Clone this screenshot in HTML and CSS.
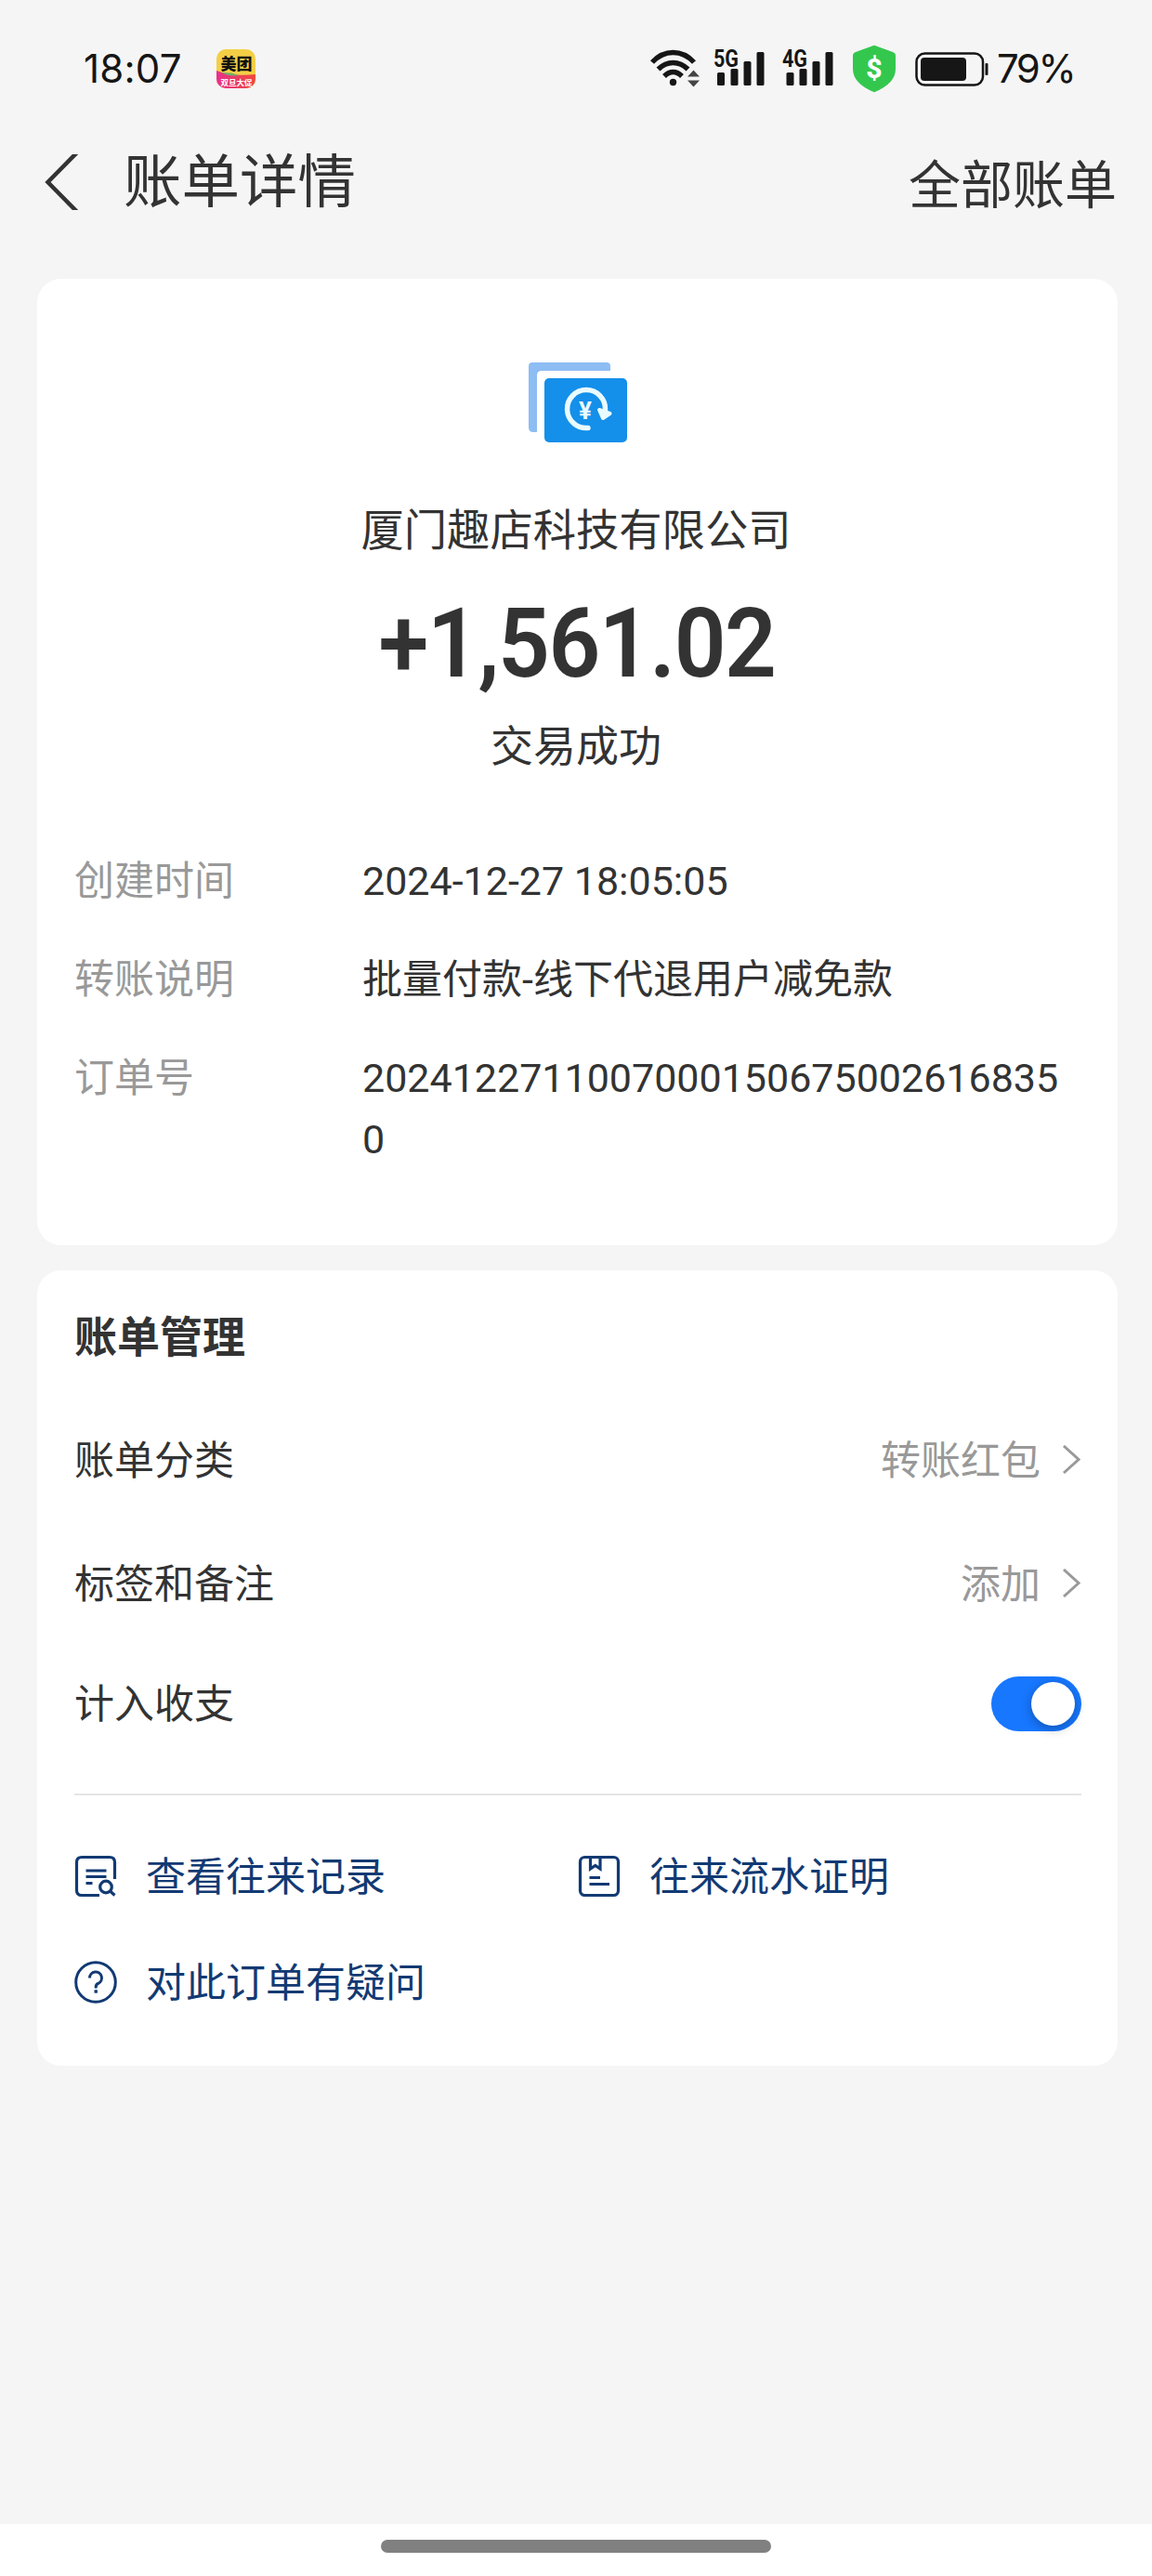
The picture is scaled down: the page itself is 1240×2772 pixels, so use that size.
FILE: index.html
```html
<!DOCTYPE html>
<html lang="zh-CN">
<head>
<meta charset="utf-8">
<title>账单详情</title>
<link rel="stylesheet" href="styles.css">
</head>
<body>
<div class="page">
  <div class="status-bar">
    <span class="clock">18:07</span>
    <svg class="app-badge" width="42" height="42" viewBox="0 0 42 42">
      <defs>
        <clipPath id="badge"><rect width="42" height="42" rx="10"/></clipPath>
        <linearGradient id="promo" x1="0" x2="1" y1="0" y2="0"><stop offset="0" stop-color="#e8308c"/><stop offset="1" stop-color="#ee4a3c"/></linearGradient>
      </defs>
      <g clip-path="url(#badge)">
        <rect width="42" height="42" fill="#f4cf46"/>
        <path d="M0 23C12 28 28 28.500 42 27V42H0Z" fill="url(#promo)"/>
        <path d="M5 25C12 28.500 18 29 24 28L16 25.500Z" fill="#6fae6a"/>
        <text class="badge-name" x="21.500" y="21.500">美团</text>
        <text class="badge-promo" x="21.500" y="38.500">双旦大促</text>
      </g>
    </svg>
    <svg class="status-icons" width="370" height="56" viewBox="696 46 370 56">
      <g fill="none" stroke="#161616" stroke-width="5.500">
        <path d="M702 67C715 53 734 53 747 67"/>
        <path d="M708.500 74.500C718 65 731 65 740.500 74.500"/>
        <path d="M715 82C721 76 728 76 734 82"/>
      </g>
      <circle cx="724.500" cy="88.500" r="3.700" fill="#161616"/>
      <path d="M740 82.500L746.500 75.500L753 82.500ZM740 86.500L746.500 93.500L753 86.500Z" fill="#444"/>
      <text class="net" x="768" y="72" textLength="27" lengthAdjust="spacingAndGlyphs">5G</text>
      <text class="net" x="842" y="72" textLength="27" lengthAdjust="spacingAndGlyphs">4G</text>
      <g fill="#161616">
        <rect x="772" y="78" width="8" height="14" rx="1.500"/>
        <rect x="786.500" y="74" width="8" height="18" rx="1.500"/>
        <rect x="800.500" y="66" width="8" height="26" rx="1.500"/>
        <rect x="814.500" y="56" width="8" height="36" rx="1.500"/>
        <rect x="846.500" y="78" width="8" height="14" rx="1.500"/>
        <rect x="860.500" y="74" width="8" height="18" rx="1.500"/>
        <rect x="874.500" y="66" width="8" height="26" rx="1.500"/>
        <rect x="888.500" y="56" width="8" height="36" rx="1.500"/>
      </g>
      <path d="M941 48.800L961 56Q964 57.200 964 60V74Q964 90 941 99.200Q918 90 918 74V60Q918 57.200 921 56Z" fill="#34c74e"/>
      <text class="dollar" x="941" y="84">$</text>
      <rect x="986.500" y="57.500" width="71.500" height="34" rx="9" fill="none" stroke="#161616" stroke-width="2.500"/>
      <rect x="991" y="62" width="49" height="25" rx="4" fill="#161616"/>
      <rect x="1060.500" y="68" width="3" height="13" rx="1" fill="#161616"/>
    </svg>
    <span class="battery-level">79%</span>
  </div>

  <header class="nav">
    <svg class="back" width="40" height="60" viewBox="46 166 40 60">
      <path d="M84 163L51.500 196L84 229" fill="none" stroke="#333" stroke-width="4.500"/>
    </svg>
    <h1 class="nav-title">账单详情</h1>
    <a class="nav-action">全部账单</a>
  </header>

  <section class="card summary">
    <svg class="pay-icon" width="106" height="86" viewBox="569 390 106 86">
      <path d="M569 394Q569 390 573 390H653Q657 390 657 394V399H583Q578 399 578 404V465H574Q569 465 569 460Z" fill="#8dbdf3"/>
      <rect x="586" y="407" width="89" height="69" rx="5" fill="#148fea"/>
      <path d="M633 460.500A20.500 20.500 0 1 1 651.500 441" fill="none" stroke="#e9fbff" stroke-width="5.500" stroke-linecap="round"/>
      <path d="M645 441L656.500 445L649 450Z" fill="#e9fbff" stroke="#e9fbff" stroke-width="4" stroke-linejoin="round"/>
      <text class="yuan" x="630" y="451">¥</text>
    </svg>
    <div class="payee">厦门趣店科技有限公司</div>
    <div class="amount">+1,561.02</div>
    <div class="state">交易成功</div>
    <dl class="details">
      <dt>创建时间</dt><dd>2024-12-27 18:05:05</dd>
      <dt>转账说明</dt><dd>批量付款-线下代退用户减免款</dd>
      <dt>订单号</dt><dd>20241227110070001506750026168350</dd>
    </dl>
  </section>

  <section class="card manage">
    <h2 class="manage-title">账单管理</h2>
    <div class="row">
      <span>账单分类</span>
      <span class="row-value">转账红包
        <svg width="20" height="34" viewBox="0 0 20 34"><path d="M1 1L17 15.500L1 30" fill="none" stroke="#999" stroke-width="3"/></svg>
      </span>
    </div>
    <div class="row row-tags">
      <span>标签和备注</span>
      <span class="row-value">添加
        <svg width="20" height="34" viewBox="0 0 20 34"><path d="M1 1L17 15.500L1 30" fill="none" stroke="#999" stroke-width="3"/></svg>
      </span>
    </div>
    <div class="row row-count">
      <span>计入收支</span>
      <span class="toggle"><span class="knob"></span></span>
    </div>
    <div class="links">
      <a class="link">
        <svg width="46" height="46" viewBox="0 0 46 46" fill="none" stroke="#123a73" stroke-width="3.200">
          <path d="M27 43.500H8Q2.500 43.500 2.500 38V8Q2.500 2.500 8 2.500H38Q43.500 2.500 43.500 8V26"/>
          <path d="M12.500 17H34.500M12.500 23.500H34.500M12.500 30.500H19.500"/>
          <circle cx="34" cy="34.500" r="6.300"/>
          <path d="M38.500 39L43.500 43.500"/>
        </svg>
        查看往来记录
      </a>
      <a class="link">
        <svg width="46" height="46" viewBox="0 0 46 46" fill="none" stroke="#123a73" stroke-width="3.200">
          <rect x="2.500" y="2.500" width="41" height="41" rx="5"/>
          <path d="M13.500 3V15L18.800 11.500L24 15V3M12.500 24.500H24M12.500 31.500H34"/>
        </svg>
        往来流水证明
      </a>
      <a class="link">
        <svg width="46" height="46" viewBox="0 0 46 46" fill="none" stroke="#123a73" stroke-width="3">
          <circle cx="23" cy="23" r="21.300"/>
          <path d="M16.500 18.500A6.500 6.500 0 1 1 25.500 24.500Q23.200 25.500 23.200 28V29.500"/>
          <path d="M21.500 33H24.900" stroke-width="3.400"/>
        </svg>
        对此订单有疑问
      </a>
    </div>
  </section>

  <div class="home-bar"><span></span></div>
</div>
</body>
</html>
```

FILE: styles.css
```css
* { box-sizing: border-box; }

body {
  margin: 0;
  background: #f5f5f5;
  color: #333;
  font-family: "Roboto", "Noto Sans CJK SC", sans-serif;
  font-size: 43px;
  line-height: 66px;
}

h1, h2, dl, dt, dd { margin: 0; }
svg { display: block; flex: none; }

.page {
  display: flex;
  flex-direction: column;
  height: 2772px;
}

.status-bar {
  display: flex;
  align-items: center;
  height: 150px;
  padding: 0 0 2px 90px;
  color: #161616;
  font-family: "Inter", sans-serif;
  font-size: 42px;
}
.clock { width: 143px; letter-spacing: 0.200px; }
.status-icons { margin-left: 421px; }
.battery-level { margin-left: 7px; letter-spacing: -2.500px; }

.badge-name { font: 900 17px "Noto Sans CJK SC", sans-serif; text-anchor: middle; fill: #111; }
.badge-promo { font: 700 8.500px "Noto Sans CJK SC", sans-serif; text-anchor: middle; fill: #fff; }
.net { font: 700 25px "Roboto", sans-serif; fill: #161616; }
.dollar { font: 800 30px "Roboto", sans-serif; text-anchor: middle; fill: #fff; }

.nav {
  display: flex;
  align-items: flex-start;
  height: 150px;
  padding: 0 38px 0 46px;
}
.back { margin: 16px 47px 0 0; }
.nav-title { font-size: 62.500px; font-weight: 400; line-height: 94px; }
.nav-action { margin-left: auto; font-size: 56px; line-height: 100px; }

.card {
  margin: 0 37px 0 40px;
  border-radius: 26px;
  background: #fff;
}

.summary {
  display: flex;
  flex-direction: column;
  align-items: center;
  height: 1040px;
  padding: 90px 40px 80px;
}
.yuan { font: 700 26px "Roboto", sans-serif; text-anchor: middle; fill: #e9fbff; }
.payee { margin: 65px 3px 0 0; font-size: 46.300px; line-height: 60px; }
.amount {
  margin-top: 37px;
  font-size: 104px;
  font-weight: 600;
  line-height: 110px;
  letter-spacing: -1.500px;
  transform: scaleX(0.940);
}
.state { margin: 25px 3px 0 0; font-size: 46px; line-height: 60px; }
.details {
  display: grid;
  grid-template-columns: 310px 770px;
  row-gap: 40px;
  align-self: stretch;
  margin-top: 82px;
}
.details dt { color: #999; }
.details dd { word-break: break-all; }

.manage {
  height: 856px;
  margin-top: 27px;
  padding: 42px 39px 55px 40px;
}
.manage-title { margin-bottom: 37px; font-size: 46px; font-weight: 700; line-height: 60px; }
.row {
  display: flex;
  align-items: center;
  justify-content: space-between;
  height: 132px;
}
.row-tags { height: 133px; }
.row-count { height: 126px; }
.row-value { display: flex; align-items: center; gap: 24px; color: #999; }
.toggle {
  display: flex;
  justify-content: flex-end;
  width: 97px;
  height: 59px;
  margin-bottom: 1px;
  padding: 6px 7px;
  border-radius: 30px;
  background: #1777ff;
}
.knob {
  width: 47px;
  height: 47px;
  border-radius: 50%;
  background: #fff;
  box-shadow: 0 3px 12px rgba(0, 0, 0, 0.300);
}

.links {
  display: grid;
  grid-template-columns: 542px 542px;
  row-gap: 48px;
  margin-top: 33px;
  padding-top: 55px;
  border-top: 2px solid #e5e5e5;
}
.link { display: flex; align-items: center; gap: 31px; color: #123a73; }
.link svg { margin-bottom: 2px; }

.home-bar {
  display: flex;
  justify-content: center;
  height: 56px;
  margin-top: auto;
  padding-top: 17px;
  background: #fff;
}
.home-bar span { width: 420px; height: 14px; border-radius: 7px; background: #808080; }
```
